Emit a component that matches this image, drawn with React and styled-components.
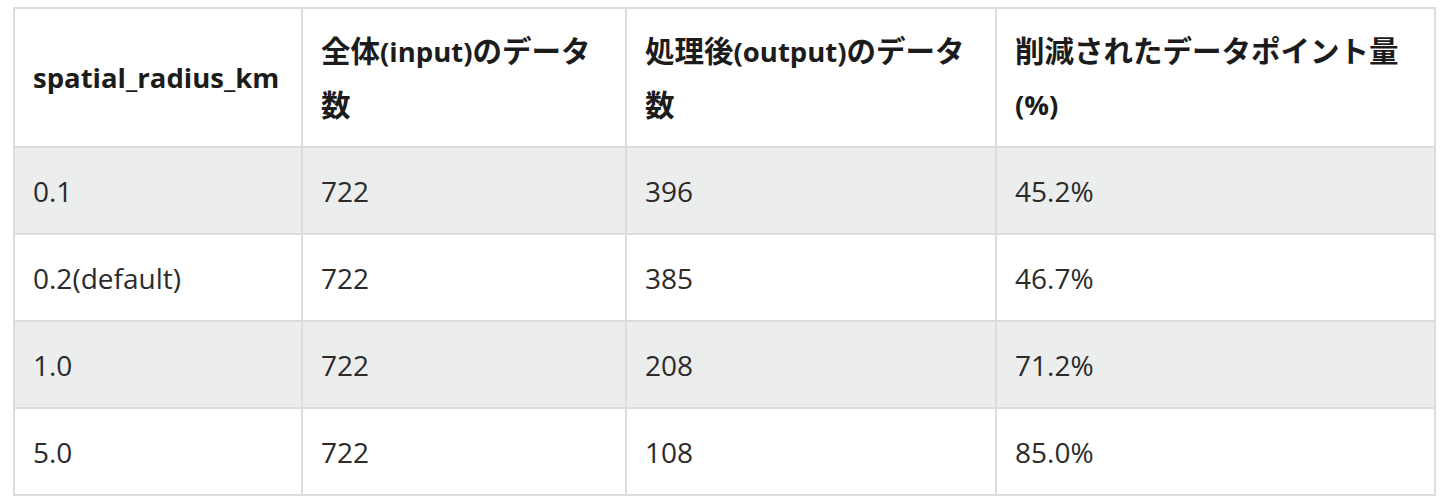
import React from "react";
import styled, { createGlobalStyle } from "styled-components";

const GlobalStyle = createGlobalStyle`
  html, body {
    margin: 0;
    padding: 0;
    background: #fff;
  }
  body {
    font-family: "Open Sans", "Noto Sans CJK JP", sans-serif;
    color: #2a2a2a;
  }
`;

const rows = [
  { radius: "0.1", input: "722", output: "396", reduced: "45.2%" },
  { radius: "0.2(default)", input: "722", output: "385", reduced: "46.7%" },
  { radius: "1.0", input: "722", output: "208", reduced: "71.2%" },
  { radius: "5.0", input: "722", output: "108", reduced: "85.0%" },
];

const Wrap = styled.div`
  padding: 7px 0 0 13px;
`;

const Table = styled.table`
  width: 1421px;
  border-collapse: collapse;
  table-layout: fixed;
  border: 2px solid #dcdcdc;
`;

const Col = styled.col`
  width: ${(p) => p.w}px;
`;

const HeadCell = styled.th`
  height: 137px;
  padding: 0 18px;
  border: 2px solid #dcdcdc;
  text-align: left;
  vertical-align: middle;
  font-size: 27.5px;
  font-weight: 700;
  line-height: 53px;
  color: #1c1c1c;
  background: #fff;
  white-space: nowrap;
`;

// Japanese glyphs render a little larger than the latin text in the original
const Jp = styled.span`
  font-size: 29.5px;
`;

const Row = styled.tr`
  background: ${(p) => (p.striped ? "#eceded" : "#fff")};
`;

const Cell = styled.td`
  height: 85px;
  padding: 0 18px;
  border: 2px solid #dcdcdc;
  vertical-align: middle;
  font-size: 28px;
  line-height: 38px;
  color: #2b2b2b;
`;

export default function App() {
  return (
    <>
      <GlobalStyle />
      <Wrap>
        <Table>
          <colgroup>
            <Col w={288} />
            <Col w={324} />
            <Col w={370} />
            <Col w={439} />
          </colgroup>
          <thead>
            <tr>
              <HeadCell>spatial_radius_km</HeadCell>
              <HeadCell>
                <Jp>全体</Jp>(input)<Jp>のデータ</Jp>
                <br />
                <Jp>数</Jp>
              </HeadCell>
              <HeadCell>
                <Jp>処理後</Jp>(output)<Jp>のデータ</Jp>
                <br />
                <Jp>数</Jp>
              </HeadCell>
              <HeadCell>
                <Jp>削減されたデータポイント量</Jp>
                <br />
                (%)
              </HeadCell>
            </tr>
          </thead>
          <tbody>
            {rows.map((r, i) => (
              <Row key={r.radius} striped={i % 2 === 0}>
                <Cell>{r.radius}</Cell>
                <Cell>{r.input}</Cell>
                <Cell>{r.output}</Cell>
                <Cell>{r.reduced}</Cell>
              </Row>
            ))}
          </tbody>
        </Table>
      </Wrap>
    </>
  );
}
